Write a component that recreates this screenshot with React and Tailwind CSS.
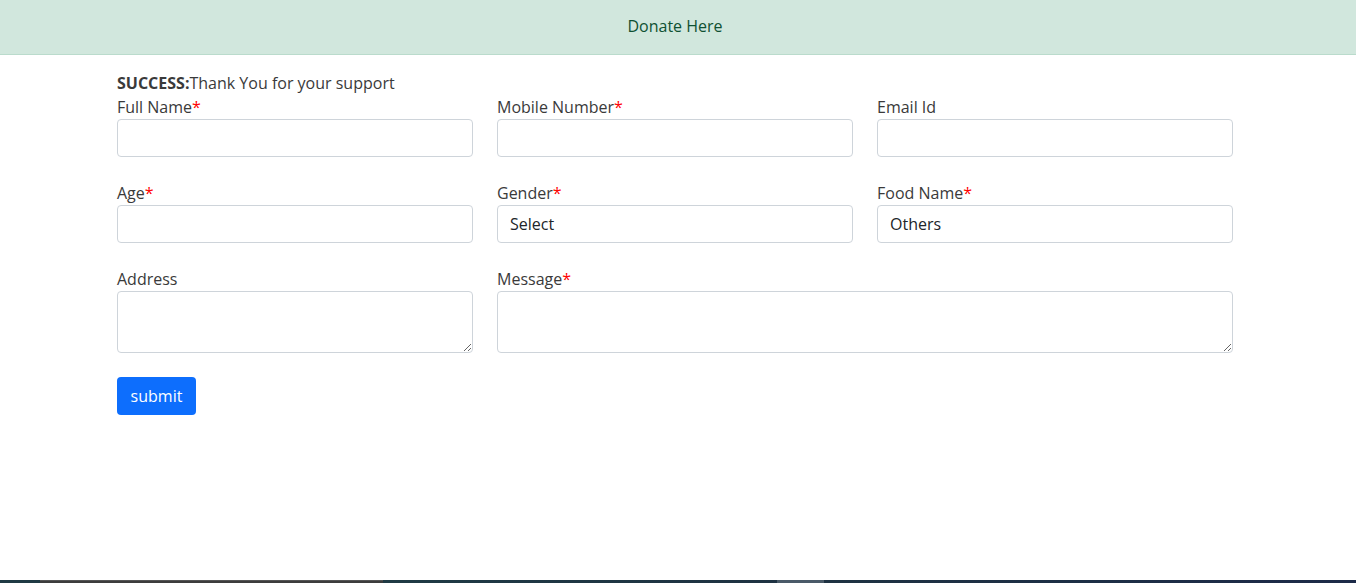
import { useState } from 'react';

const inputClass =
  'block w-full h-[38px] px-3 py-1.5 text-base text-[#212529] bg-white border border-[#ced4da] rounded-[4px] outline-none';

function Label({ children, required }) {
  return (
    <label className="block h-6 leading-6 text-base text-[#3a3a3a]">
      {children}
      {required && <span className="text-[#ff0000]">*</span>}
    </label>
  );
}

export default function App() {
  const [formData, setFormData] = useState({
    fullName: '',
    mobile: '',
    email: '',
    age: '',
    gender: '',
    food: 'others',
    address: '',
    message: ''
  });

  const handleChange = (e) => {
    const { name, value } = e.target;
    setFormData(prev => ({ ...prev, [name]: value }));
  };

  return (
    <div className="relative min-h-[583px] bg-white font-['Open_Sans',sans-serif] text-[#212529]">
      <div className="h-[55px] pr-[6px] pb-[3px] flex items-center justify-center bg-[#d1e7dd] border-b border-[#badbcc] text-[#0f5132] text-base">
        Donate Here
      </div>

      <div className="w-[1140px] ml-[105px] px-3 pt-4">
        <p className="h-6 leading-6 text-[#3a3a3a]">
          <span className="font-bold">SUCCESS:</span>Thank You for your support
        </p>

        <form onSubmit={(e) => e.preventDefault()}>
          <div className="grid grid-cols-3 gap-x-6 gap-y-6">
            <div>
              <Label required>Full Name</Label>
              <input name="fullName" value={formData.fullName} onChange={handleChange} className={inputClass} />
            </div>
            <div>
              <Label required>Mobile Number</Label>
              <input name="mobile" value={formData.mobile} onChange={handleChange} className={inputClass} />
            </div>
            <div>
              <Label>Email Id</Label>
              <input name="email" value={formData.email} onChange={handleChange} className={inputClass} />
            </div>

            <div>
              <Label required>Age</Label>
              <input name="age" value={formData.age} onChange={handleChange} className={inputClass} />
            </div>
            <div>
              <Label required>Gender</Label>
              <select name="gender" value={formData.gender} onChange={handleChange} className={inputClass + ' appearance-none'}>
                <option value="">Select</option>
                <option value="male">Male</option>
                <option value="female">Female</option>
              </select>
            </div>
            <div>
              <Label required>Food Name</Label>
              <select name="food" value={formData.food} onChange={handleChange} className={inputClass + ' appearance-none'}>
                <option value="others">Others</option>
              </select>
            </div>

            <div>
              <Label>Address</Label>
              <textarea name="address" value={formData.address} onChange={handleChange} className="block w-full h-[62px] px-3 py-1.5 text-base bg-white border border-[#ced4da] rounded-[4px] outline-none" />
            </div>
            <div className="col-span-2">
              <Label required>Message</Label>
              <textarea name="message" value={formData.message} onChange={handleChange} className="block w-full h-[62px] px-3 py-1.5 text-base bg-white border border-[#ced4da] rounded-[4px] outline-none" />
            </div>
          </div>

          <button type="submit" className="mt-6 h-[38px] w-[79px] flex items-center justify-center bg-[#0d6efd] text-white text-base rounded-[4px]">
            submit
          </button>
        </form>
      </div>

      <div className="absolute left-0 right-0 bottom-0 h-[3px] flex">
        <div className="w-[40px] bg-[#1f3a44]" />
        <div className="w-[343px] bg-[#3c3c3c] border-t border-[#555]" />
        <div className="w-[394px] bg-gradient-to-r from-[#1f3a44] to-[#1e3242]" />
        <div className="w-[47px] bg-[#4a5a68]" />
        <div className="flex-1 bg-gradient-to-r from-[#1e3242] to-[#1c2a48]" />
      </div>
    </div>
  );
}
